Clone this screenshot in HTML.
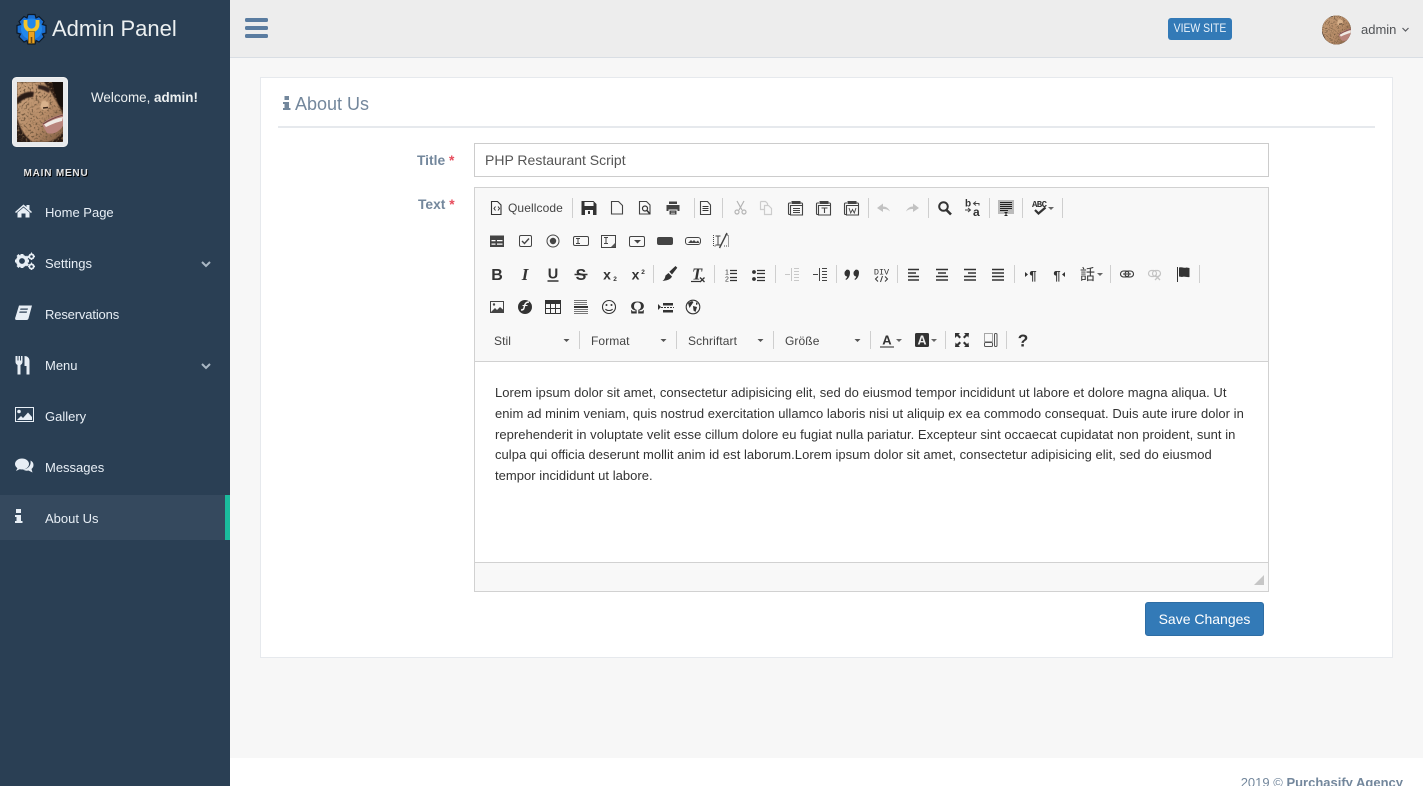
<!DOCTYPE html>
<html><head><meta charset="utf-8"><title>About Us</title>
<style>
html,body{margin:0;padding:0;width:1423px;height:786px;overflow:hidden;background:#f7f7f7;font-family:"Liberation Sans",Arial,sans-serif;color:#73879c}
#w{position:relative;width:1423px;height:786px;overflow:hidden;background:#f7f7f7}
.a{position:absolute;white-space:nowrap}
.box{position:absolute;box-sizing:border-box}
.m{position:absolute;left:45px;color:#e7eef5;font-size:13px;line-height:20px;white-space:nowrap}
.t{position:absolute;font-size:12px;line-height:14px;color:#444;white-space:nowrap;letter-spacing:.1px}
</style></head><body><div id="w">
<div class="box" style="left:0;top:0;width:230px;height:786px;background:#2a3f54"></div>
<div class="box" style="left:0;top:495px;width:230px;height:45px;background:#35495e"></div>
<div class="box" style="left:225px;top:495px;width:5px;height:45px;background:#1abb9c"></div>
<div class="box" style="left:230px;top:0;width:1193px;height:58px;background:#ededed;border-bottom:1px solid #d9dee4"></div>
<div class="box" style="left:230px;top:758px;width:1193px;height:28px;background:#fff"></div>
<div class="box" style="left:260px;top:77px;width:1133px;height:581px;background:#fff;border:1px solid #e6e9ed"></div>
<div class="box" style="left:278px;top:126px;width:1097px;height:2px;background:#e6e9ed"></div>

<div class="a" style="left:52px;top:15px;font-size:22px;line-height:28px;color:#ecf0f1">Admin Panel</div>
<div class="a" style="left:91px;top:89px;font-size:13.4px;line-height:17px;color:#ecf0f1">Welcome, <b>admin!</b></div>
<div class="a" style="left:23.5px;top:167px;font-size:10px;line-height:14px;font-weight:bold;color:#e7e7e7;letter-spacing:.8px;text-shadow:1px 1px #000">MAIN MENU</div>
<div class="m" style="top:203px">Home Page</div>
<div class="m" style="top:254px">Settings</div>
<div class="m" style="top:305px;letter-spacing:-.15px">Reservations</div>
<div class="m" style="top:356px">Menu</div>
<div class="m" style="top:407px">Gallery</div>
<div class="m" style="top:458px">Messages</div>
<div class="m" style="top:509px">About Us</div>

<div class="box" style="left:1168px;top:18px;width:64px;height:22px;background:#337ab7;border-radius:3px"></div>
<div class="a" style="left:1168px;width:64px;text-align:center;top:21px;font-size:12px;line-height:15px;color:#eaf3fb;transform:scaleX(.87)">VIEW SITE</div>
<div class="a" style="left:1361px;top:22px;font-size:13px;line-height:15px;color:#515356">admin</div>

<div class="a" style="left:295px;top:94px;font-size:18px;line-height:21px;color:#73879c">About Us</div>
<div class="a" style="left:417px;top:153px;font-size:13.8px;line-height:16px;font-weight:bold;color:#73879c">Title <span style="color:#e74c5c">*</span></div>
<div class="a" style="left:418px;top:197px;font-size:13.8px;line-height:16px;font-weight:bold;color:#73879c">Text <span style="color:#e74c5c">*</span></div>

<div class="box" style="left:474px;top:143px;width:795px;height:34px;background:#fff;border:1px solid #ccc"></div>
<div class="a" style="left:485px;top:152px;font-size:14px;line-height:16px;color:#555">PHP Restaurant Script</div>

<div class="box" style="left:474px;top:187px;width:795px;height:405px;background:#f8f8f8;border:1px solid #d1d1d1"></div>
<div class="box" style="left:475px;top:361px;width:793px;height:202px;background:#fff;border-top:1px solid #d1d1d1;border-bottom:1px solid #d1d1d1"></div>
<div class="a" style="left:495px;top:383px;font-size:13px;letter-spacing:.03px;line-height:20.8px;color:#333">Lorem ipsum dolor sit amet, consectetur adipisicing elit, sed do eiusmod tempor incididunt ut labore et dolore magna aliqua. Ut<br>enim ad minim veniam, quis nostrud exercitation ullamco laboris nisi ut aliquip ex ea commodo consequat. Duis aute irure dolor in<br>reprehenderit in voluptate velit esse cillum dolore eu fugiat nulla pariatur. Excepteur sint occaecat cupidatat non proident, sunt in<br>culpa qui officia deserunt mollit anim id est laborum.Lorem ipsum dolor sit amet, consectetur adipisicing elit, sed do eiusmod<br>tempor incididunt ut labore.</div>

<div class="t" style="left:508px;top:201px">Quellcode</div>
<div class="t" style="left:494px;top:334px">Stil</div>
<div class="t" style="left:591px;top:334px">Format</div>
<div class="t" style="left:688px;top:334px">Schriftart</div>
<div class="t" style="left:785px;top:334px">Größe</div>

<div class="box" style="left:1145px;top:602px;width:119px;height:34px;background:#337ab7;border:1px solid #2e6da4;border-radius:3px"></div>
<div class="a" style="left:1145px;width:119px;text-align:center;top:611px;font-size:14px;line-height:16px;color:#fff">Save Changes</div>
<div class="a" style="right:20px;top:775px;font-size:13px;line-height:15px;color:#73879c">2019 © <b>Purchasify Agency</b></div>

<svg class="a" style="left:0;top:0" width="1423" height="786" viewBox="0 0 1423 786" xmlns="http://www.w3.org/2000/svg">
<defs>
<linearGradient id="sk" x1="0" y1="0" x2="1" y2="1"><stop offset="0" stop-color="#c9a27c"/><stop offset=".6" stop-color="#b78c68"/><stop offset="1" stop-color="#7d5a40"/></linearGradient>
<filter id="sp" x="0" y="0" width="1" height="1"><feTurbulence type="fractalNoise" baseFrequency=".5" numOctaves="2" seed="4"/><feColorMatrix type="matrix" values="0 0 0 0 .17  0 0 0 0 .1  0 0 0 0 .05  5 0 0 0 -2.6"/></filter>
<filter id="bl"><feGaussianBlur stdDeviation=".6"/></filter>
<clipPath id="pc"><rect x="17" y="82" width="46" height="60"/></clipPath>
<clipPath id="cc"><circle cx="1336.500" cy="30" r="14.500"/></clipPath>
<g id="photo">
<rect x="17" y="82" width="46" height="60" fill="#2a1a12"/>
<path d="M17 82H44C50 90 56 100 60 108L63 114V132C58 138 52 142 46 142H32C24 136 17 128 17 118Z" fill="url(#sk)" filter="url(#bl)"/>
<path d="M17 118C20 128 24 136 32 142H17z" fill="#2a1a12" filter="url(#bl)"/>
<rect x="17" y="82" width="46" height="60" filter="url(#sp)"/>
<path d="M52 82h11v26l-4-3C56 97 54 90 52 82z" fill="#17100c"/>
<path d="M17 98c5-5 11-7 17-6l-1 5c-5 0-10 2-14 6l-2 1z" fill="#2a1c14" filter="url(#bl)"/>
<path d="M38 85c4 0 9 1 12 4l-1 4c-4-2-7-4-11-4z" fill="#33241a" filter="url(#bl)"/>
<path d="M42 101c3-1 6 0 7 3l-1 5-6 1-2-4z" fill="#d9b28c" filter="url(#bl)"/>
<path d="M43 108l5-.5" stroke="#3a2518" stroke-width="1.500"/>
<path d="M42 124c5-5 13-8 21-10v12c-4 6-10 9-16 7z" fill="#b9847c"/>
<path d="M44 124.500c5-3 11-6 19-7.500l-1 4c-5 1-12 4-16 6z" fill="#efe9e4"/>
<path d="M43 124c6-4 13-7 20-9" stroke="#6e4440" stroke-width="1" fill="none"/>
</g>
</defs>

<!-- logo -->
<g transform="translate(31.500 29)">
<path d="M-3.500-14.500h7l1 3.500 3-1.500 5 5-1.500 3 3.500 1v7.500l-3.500 1 1.500 3-5 5-3-1.500-1 3.500h-7l-1-3.500-3 1.500-5-5 1.500-3-3.500-1V-3.500l3.500-1-1.500-3 5-5 3 1.500z" fill="#1b6fd2" stroke="#0e1a28" stroke-width="1.200"/>
<circle r="10.500" fill="#2088ec"/>
<path d="M-6-9v4.500a6 6 0 0 0 12 0V-9" stroke="#f5c52a" stroke-width="3.800" fill="none"/>
<path d="M-3.200 2.500h6.400V14.500h-6.400z" fill="#eda31e" stroke="#55400f" stroke-width=".5"/><path d="M-.8 8h1.600v6h-1.600z" fill="#6b4a12"/>
</g>

<!-- sidebar avatar -->
<rect x="12.500" y="77.500" width="55" height="69" rx="4" fill="#e8eaec" stroke="#f1f1f1"/>
<g clip-path="url(#pc)"><use href="#photo"/></g>

<!-- top avatar -->
<g clip-path="url(#cc)"><use href="#photo" transform="translate(1311 -46) scale(.65)"/></g>
<path d="M1402.500 28l3 3 3-3" stroke="#5a5c60" stroke-width="1.200" fill="none"/>

<!-- hamburger -->
<g fill="#5a7ca0"><rect x="245" y="18" width="23" height="4" rx="1.500"/><rect x="245" y="26" width="23" height="4" rx="1.500"/><rect x="245" y="34" width="23" height="4" rx="1.500"/></g>

<!-- sidebar icons -->
<g fill="#e7eef5">
<path d="M15 212l8.500-7.500 3 2.500v-2h3v4.600l2.500 2.400-1 1-7.500-6.500-7.500 6.500zM17.500 212.500l6-5 6 5v5h-4v-4h-4v4h-4z"/>
<circle cx="22" cy="261" r="4.500" fill="none" stroke="#e7eef5" stroke-width="3.200"/>
<path d="M20.500 254h3v2h-3zM20.500 266h3v2h-3zM15 259.500h2v3h-2zM27 259.500h2v3h-2zM16.500 256l2-2 1.500 1.500-2 2zM25.500 265l2-2 1.500 1.500-2 2zM16.500 266l2 2 1.500-1.500-2-2zM25.500 257l2 2 1.500-1.500-2-2z"/>
<circle cx="31.500" cy="256.500" r="2.200" fill="none" stroke="#e7eef5" stroke-width="1.800"/>
<circle cx="31.500" cy="266.500" r="2.200" fill="none" stroke="#e7eef5" stroke-width="1.800"/>
<path d="M31 252.500h1v1.500h-1zM31 259h1v1h-1zM28 256h1.500v1H28zM33.500 256H35v1h-1.500zM31 262.500h1v1.500h-1zM31 269h1v1h-1zM28 266h1.500v1H28zM33.500 266H35v1h-1.500z"/>
<path d="M19 305.500h13l-3.500 13c-.3 1-1 1.500-2 1.500H16.500c-1.500 0-1.700-1.500-1-3zM20.500 308.500l-.4 1.200h7.500l.4-1.200zM19.600 311.500l-.4 1.200h7.500l.4-1.200z" fill-rule="evenodd"/>
<path d="M15.500 356v6c0 1.500 1 2.500 2 3v9.500h3V365c1-.5 2-1.500 2-3v-6h-1.500v4.500h-1V356h-1.500v4.500h-1V356zM24.500 356c2.500 0 5 1.500 5 5v13.500h-3V366h-2z"/>
<path d="M15 407h19v15H15zM16 408v13h17v-13z" fill-rule="evenodd"/>
<circle cx="19" cy="411.500" r="1.800"/><path d="M17 420l4-4 2 2 5-5.500 4 4.500v3z"/>
<ellipse cx="22" cy="464" rx="7" ry="5.500"/><path d="M18 467l-2 4 5-2.500z"/>
<path d="M30.500 460.500c2 1 3 2.500 3 4.500 0 2-1 3-2 4l1 3.500-4-2c-2 .5-4 0-5.500-1 4-.3 8.500-3 7.500-9z"/>
<path d="M16 509h5v4h-5zM15 515h6v6h1.500v2H15v-2h1.500v-4H15z"/>
</g>
<g stroke="#a9b7c4" stroke-width="2" fill="none"><path d="M202 262l4 4 4-4M202 364l4 4 4-4"/></g>

<!-- heading i -->
<path d="M284.500 96h4.500v4h-4.500zM283 102h6v6h1.500v2H283v-2h1.500v-4H283z" fill="#73879c"/>

<!-- toolbar separators -->
<g stroke="#cfcfcf" stroke-width="1" transform="translate(.5 0)">
<path d="M572 198v20M694 198v20M722 198v20M868 198v20M928 198v20M989 198v20M1022 198v20M1062 198v20"/>
<path d="M653 265v18M714 265v18M775 265v18M836 265v18M897 265v18M1014 265v18M1110 265v18M1199 265v18"/>
<path d="M579 331v18M676 331v18M773 331v18M870 331v18M945 331v18M1006 331v18"/>
</g>

<!-- row 1 -->
<g fill="none" stroke="#333" stroke-width="1.100">
<path d="M491.500 201.500h6l3.500 3.500v9.500h-9.500z"/><path d="M495.500 206.500l-1.500 2 1.500 2M498 206.500l1.500 2-1.500 2" stroke-width="1"/>
<path d="M611.500 201.500h7l4 4v8.500h-11z" stroke="#444"/>
<path d="M639.500 201.500h7l3.500 3.500v9h-10.500z" stroke="#444"/><circle cx="645" cy="208.500" r="2.500" stroke-width="1.200"/><path d="M647 210.500l3 3.500" stroke-width="1.500"/>
<path d="M700.500 201.500h7l3 3.500v9.500h-10z" stroke="#444"/><path d="M702.500 206.500h6M702.500 208.500h6M702.500 210.500h6"/>
</g>
<path d="M581.500 201h12l3 3v11h-15zM584.500 202v4h9v-4zM585 210v5h8v-5zM588 211h2v3h-2z" fill="#333" fill-rule="evenodd"/>
<path d="M669 201.500h8v2.500h-8zM666.500 205h13v6h-2v-1.500h-9v1.500h-2zM669.500 210.500h7v4h-7z" fill="#444"/><path d="M671 212h4M671 213.500h4" stroke="#f8f8f8" stroke-width=".6"/>
<g fill="none" stroke="#b4b4b4" stroke-width="1.200">
<path d="M737 201l5 9M744 201l-5 9"/><circle cx="737" cy="212" r="2"/><circle cx="744" cy="212" r="2"/>
<path d="M760.500 201.500h5l2 2v2M764.500 205.500h4l3 3v6h-7z" stroke="#ccc"/><path d="M760.500 201.500v8h4" stroke="#ccc"/>
</g>
<g fill="none" stroke="#444" stroke-width="1.100">
<path d="M791 203h-1.500c-.8 0-1 .5-1 1v9.500c0 .8.500 1 1 1h.5M800 203h1.500c.6 0 1 .4 1 1v1M790.500 205.500h12v9.500h-12z"/><path d="M793 208.500h7M793 210.500h7M793 212.500h7" stroke-width=".9"/>
<path d="M819 203h-1.500c-.8 0-1 .5-1 1v9.500c0 .8.500 1 1 1h.5M828 203h1.500c.6 0 1 .4 1 1v1M818.500 205.500h12v9.500h-12z"/><path d="M821.500 208h6M824.500 208v5"/>
<path d="M847 203h-1.500c-.8 0-1 .5-1 1v9.500c0 .8.500 1 1 1h.5M856 203h1.500c.6 0 1 .4 1 1v1M846.500 205.500h12v9.500h-12z"/><path d="M849 208l1.700 5 1.800-3.500 1.800 3.500 1.700-5" stroke-width=".9"/>
</g>
<path d="M791.500 201h9v3h-9zM819.500 201h9v3h-9zM847.500 201h9v3h-9z" fill="#444"/>
<path d="M877 208l6-4.500v3c3 0 5.500 1.500 7 5-2-2-4-2.500-7-2.500v3z" fill="#c2c2c2"/>
<path d="M919 208l-6-4.500v3c-3 0-5.500 1.500-7 5 2-2 4-2.500 7-2.500v3z" fill="#c2c2c2"/>
<circle cx="943.500" cy="206.500" r="4.300" fill="none" stroke="#333" stroke-width="2"/><path d="M946.500 210l4.500 4.500" stroke="#333" stroke-width="2.600"/>
<text x="965" y="206.500" font-family="Liberation Sans" font-size="10" font-weight="bold" fill="#333">b</text>
<text x="973" y="216" font-family="Liberation Sans" font-size="12" font-weight="bold" fill="#333">a</text>
<path d="M976 201.500l-2.500 2 2.500 2M974 203.500h5v2M965 210h5M968 208l2.500 2-2.500 2" fill="none" stroke="#444" stroke-width="1"/>
<rect x="998" y="200" width="16" height="14" fill="#bbb"/>
<path d="M1000 202.500h12M1000 204.500h12M1000 206.500h12M1000 208.500h12M1000 210.500h8M1006 212.500v3M1004.500 215.500h3M1004.500 212.500h3" stroke="#222" stroke-width="1.100" fill="none"/>
<text x="1032" y="207" font-family="Liberation Mono" font-size="9" font-weight="bold" fill="#333" textLength="15">ABC</text>
<path d="M1035 210l3.500 3.500 7-6" fill="none" stroke="#333" stroke-width="2.200"/>
<path d="M1048 207h6l-3 3z" fill="#666"/>

<!-- row 2 -->
<g fill="none" stroke="#444" stroke-width="1">
<rect x="519.500" y="235.500" width="12" height="11" rx="1.500"/><path d="M522 241l2.500 2.500 4.500-5" stroke-width="1.400"/>
<circle cx="553" cy="241" r="6"/>
<rect x="573.500" y="236.500" width="15" height="9" rx="1.500"/><path d="M576 238.500h4M578 238.500v5M576 243.500h4"/>
<path d="M601.500 235.500h14v12h-14z"/><path d="M604 237.500h4M606 237.500v6M604 243.500h4"/>
<rect x="629.500" y="236.500" width="15" height="10" rx="1.500"/>
<rect x="685.500" y="237.500" width="15" height="7" rx="2.500"/>
<path d="M715.500 236h5M718 236v9M715.500 245h5"/>
<path d="M713.500 235v11h2M725 235h3.500v11h-5" stroke-dasharray="1 1"/>
</g>
<rect x="490" y="235.500" width="14" height="11.500" fill="#444"/>
<path d="M491.500 240h4v1.200h-4zM491.500 243.500h4v1.200h-4zM497 240h5.500v1.200H497zM497 243.500h5.500v1.200H497z" fill="#fff"/>
<circle cx="553" cy="241" r="3.200" fill="#444"/>
<path d="M611 247l4.500-4.500v4.500z" fill="#555"/>
<path d="M634 240h7l-3.500 3.500z" fill="#444"/>
<rect x="657" y="237" width="16" height="8" rx="2" fill="#444"/>
<path d="M688 243l3-3 1.500 1.500L694 240l2 2 2-1.500 1.500 2.500z" fill="#444"/>
<path d="M727 233l-7.500 15" stroke="#444" stroke-width="1.400"/>

<!-- row 3 -->
<text x="497" y="280" text-anchor="middle" font-family="Liberation Sans" font-size="16" font-weight="bold" fill="#333">B</text>
<text x="525" y="280" text-anchor="middle" font-family="Liberation Serif" font-size="17" font-weight="bold" font-style="italic" fill="#333">I</text>
<text x="553" y="278.500" text-anchor="middle" font-family="Liberation Sans" font-size="14.500" font-weight="bold" fill="#333">U</text><path d="M547.500 281h11" stroke="#333" stroke-width="1.500"/>
<text x="581" y="280" text-anchor="middle" font-family="Liberation Sans" font-size="16" font-weight="bold" fill="#333">S</text><path d="M574.500 274.500h13" stroke="#333" stroke-width="1.500"/>
<text x="607" y="279.500" text-anchor="middle" font-family="Liberation Sans" font-size="14" font-weight="bold" fill="#333">x</text><text x="615" y="281" text-anchor="middle" font-family="Liberation Sans" font-size="6.500" font-weight="bold" fill="#333">2</text>
<text x="635.500" y="279.500" text-anchor="middle" font-family="Liberation Sans" font-size="14" font-weight="bold" fill="#333">x</text><text x="643" y="274" text-anchor="middle" font-family="Liberation Sans" font-size="6.500" font-weight="bold" fill="#333">2</text>
<path d="M675.500 266l1.800 1.800-5.300 6.700-2.700-2.700zM668.500 273l3.500 3.500-1 1.500c-1.500 1.500-4 2.500-8.500 3 2-1.500 2.500-3 3-5.500z" fill="#333"/>
<text x="697" y="279.500" text-anchor="middle" font-family="Liberation Serif" font-size="16.500" font-weight="bold" font-style="italic" fill="#333">T</text>
<path d="M691 281.500h9" stroke="#333" stroke-width="1.200"/><path d="M700 277.500l4.500 4.500M704.500 277.500l-4.500 4.500" stroke="#333" stroke-width="1.300"/>
<g fill="none" stroke="#333" stroke-width="1.200">
<path d="M730 270.500h7M730 273.500h7M730 277.500h7M730 280.500h7M757 270.500h8M757 273.500h8M757 277.500h8M757 280.500h8"/>
</g>
<text x="725" y="274.500" font-family="Liberation Sans" font-size="7" fill="#333">1</text><text x="725" y="281.500" font-family="Liberation Sans" font-size="7" fill="#333">2</text>
<circle cx="754" cy="272" r="1.900" fill="#333"/><circle cx="754" cy="279" r="1.900" fill="#333"/>
<g fill="none" stroke="#c8c8c8" stroke-width="1"><path d="M791.500 268v13M794 268.500h5M794 271.500h5M794 274.500h5M794 277.500h5M794 280.500h5M785 274.500h5"/></g>
<g fill="none" stroke="#444" stroke-width="1"><path d="M819.500 268v13M822 268.500h5M822 271.500h5M822 274.500h5M822 277.500h5M822 280.500h5M813 274.500h5"/></g>
<path d="M846 270c2-1 4 0 4 2.500 0 4-2 6.500-4 7.500l-.5-1c1-.7 1.500-1.500 1.700-2.500-1.500 0-2.700-1.200-2.700-3.200 0-1.400.5-2.300 1.500-2.800zM855 270c2-1 4 0 4 2.500 0 4-2 6.500-4 7.500l-.5-1c1-.7 1.500-1.500 1.700-2.500-1.500 0-2.700-1.200-2.700-3.200 0-1.400.5-2.300 1.500-2.800z" fill="#333"/>
<text x="881.500" y="274.500" text-anchor="middle" font-family="Liberation Mono" font-size="8.500" fill="#333">DIV</text>
<path d="M878 276.500l-2.500 2.500 2.500 2.500M885 276.500l2.500 2.500-2.500 2.500M882.500 276l-2 6" fill="none" stroke="#333" stroke-width="1"/>
<g stroke="#333" stroke-width="1.600" fill="none">
<path d="M908 269.500h11M908 273h8M908 276.500h11M908 280h11"/>
<path d="M936 269.500h12M938 273h8M936 276.500h12M936 280h12"/>
<path d="M964 269.500h12M968 273h8M964 276.500h12M964 280h12"/>
<path d="M992 269.500h12M992 273h12M992 276.500h12M992 280h12"/>
</g>
<text x="1033" y="280" text-anchor="middle" font-family="Liberation Sans" font-size="13" font-weight="bold" fill="#333">¶</text><path d="M1025 272l3 2.500-3 2.500z" fill="#333"/>
<text x="1057" y="280" text-anchor="middle" font-family="Liberation Sans" font-size="13" font-weight="bold" fill="#333">¶</text><path d="M1065 272l-3 2.500 3 2.500z" fill="#333"/>
<text x="1087.500" y="279.500" text-anchor="middle" font-family="Noto Sans CJK TC,sans-serif" font-size="15" fill="#333">話</text>
<path d="M1097 273h6l-3 3z" fill="#666"/>
<g fill="none"><rect x="1120.500" y="271" width="8.500" height="6" rx="3" stroke="#333" stroke-width="1.100"/><rect x="1125" y="271" width="8.500" height="6" rx="3" stroke="#333" stroke-width="1.100"/><path d="M1123 274h8" stroke="#333"/>
<rect x="1148.500" y="270.500" width="8" height="6" rx="3" stroke="#c4c4c4" stroke-width="1.200"/><rect x="1152.500" y="270.500" width="8" height="6" rx="3" stroke="#c4c4c4" stroke-width="1.200"/><path d="M1155 275l5 5M1160 275l-5 5" stroke="#c4c4c4" stroke-width="1.300"/></g>
<path d="M1177.500 267v15" stroke="#333" stroke-width="1"/><path d="M1179 267.500c3-1 5 1 7.500 0l3 .5v9c-3 .5-5-1-7.500 0l-3-.5z" fill="#333"/>

<!-- row 4 -->
<rect x="490.500" y="301.500" width="13" height="11" fill="none" stroke="#444"/><path d="M491 312l4-4 2 2 3-3 3.500 3v2z" fill="#444"/><circle cx="494" cy="304.500" r="1.200" fill="#444"/>
<circle cx="525" cy="307" r="7" fill="#333"/><path d="M529 302c-3 0-4 1.500-4.500 4l-.5 2c-.3 1.500-1.500 2-3 2" stroke="#f8f8f8" stroke-width="1.500" fill="none"/><path d="M522.500 305.500h5" stroke="#f8f8f8"/>
<rect x="545.500" y="300.500" width="15" height="13" fill="none" stroke="#333"/><rect x="545.500" y="300.500" width="15" height="3.500" fill="#333"/><path d="M550.500 304v9M555.500 304v9M545.500 308.500h15" stroke="#333" fill="none"/>
<path d="M574 300.500h13M574 302.500h13M574 304.500h13" stroke="#777" fill="none"/><rect x="574" y="306" width="14" height="2" fill="#333"/><path d="M574 309.500h14M574 311.500h14M574 313.500h14" stroke="#777" fill="none"/>
<g fill="none" stroke="#333" stroke-width="1.100"><circle cx="609" cy="307" r="6.500"/><path d="M605.500 309c1 2 6 2 7 0"/></g><circle cx="606.500" cy="305" r="1" fill="#333"/><circle cx="611.500" cy="305" r="1" fill="#333"/>
<text x="637.500" y="313.500" text-anchor="middle" font-family="Liberation Serif" font-size="18" font-weight="bold" fill="#333">Ω</text>
<path d="M658 304l3 3-3 3z" fill="#333"/><rect x="663" y="303" width="10" height="2.500" fill="#333"/><path d="M661 307.500h13" stroke="#333" stroke-dasharray="2 1"/><rect x="663" y="310" width="10" height="2.500" fill="#333"/>
<circle cx="693" cy="307" r="6.800" fill="none" stroke="#333" stroke-width="1.100"/><path d="M688 303l4-2 1.500 1-2 3-2 3zM693 306l4 1-1.500 5-2-1.500zM696 302l2 2-2 1z" fill="#333"/>

<!-- row 5 arrows -->
<path d="M563.500 339h6l-3 3zM660.500 339h6l-3 3zM757.500 339h6l-3 3zM854.500 339h6l-3 3z" fill="#555"/>
<text x="887" y="344.500" text-anchor="middle" font-family="Liberation Sans" font-size="13" font-weight="bold" fill="#333">A</text>
<rect x="880" y="346" width="14" height="2" fill="#8d8d8d"/>
<path d="M896 339h6l-3 3z" fill="#666"/>
<rect x="915" y="333" width="14" height="14" rx="1.500" fill="#333"/>
<text x="922" y="344.500" text-anchor="middle" font-family="Liberation Sans" font-size="12.500" font-weight="bold" fill="#eee">A</text>
<path d="M931 339h6l-3 3z" fill="#666"/>
<g fill="#333"><path d="M955 333h5l-1.500 1.500 2.500 2.500-1.500 1.500-2.500-2.500L955 338zM969 333h-5l1.500 1.500-2.500 2.500 1.500 1.500 2.500-2.500 1.500 1.500zM955 347h5l-1.500-1.500 2.500-2.500-1.500-1.500-2.500 2.500-1.500-1.500zM969 347h-5l1.500-1.500-2.500-2.500 1.500-1.500 2.500 2.500 1.500-1.500z"/></g>
<g fill="none" stroke="#555"><path d="M984.500 333.500h8v8h-8z" stroke-dasharray="1 1"/><rect x="984.500" y="342.500" width="8" height="4" rx="1"/><rect x="994.500" y="333.500" width="2.500" height="13" rx="1"/></g>
<text x="1023" y="346.500" text-anchor="middle" font-family="Liberation Sans" font-size="17.500" font-weight="bold" fill="#333">?</text>

<!-- resize grip -->
<path d="M1264 575v10h-10z" fill="#c6c6c6"/>
</svg>
</div></body></html>
